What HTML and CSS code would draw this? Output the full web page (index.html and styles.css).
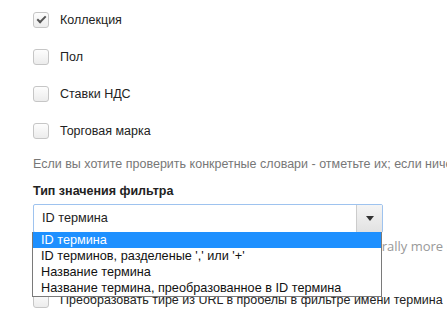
FILE: index.html
```html
<!DOCTYPE html>
<html lang="ru">
<head>
  <meta charset="UTF-8" />
  <meta name="viewport" content="width=device-width, initial-scale=1.0" />
  <title>Фильтр терминов</title>
  <link rel="stylesheet" href="styles.css">
</head>
<body>
  <div class="form">
    <div class="vocabs">
      <label class="check"><span class="box checked"></span>Коллекция</label>
      <label class="check"><span class="box"></span>Пол</label>
      <label class="check"><span class="box"></span>Ставки НДС</label>
      <label class="check"><span class="box"></span>Торговая марка</label>
    </div>
    <p class="help">Если вы хотите проверить конкретные словари - отметьте их; если ничего не отмечено, будут проверены все словари.</p>

    <div class="field">
      <div class="field-label">Тип значения фильтра</div>
      <div class="select-wrap">
        <div class="select">
          <span class="select-value">ID термина</span>
          <span class="select-btn"><span class="arrow"></span></span>
        </div>
        <ul class="options">
          <li class="active">ID термина</li>
          <li>ID терминов, разделеные ',' или '+'</li>
          <li>Название термина</li>
          <li>Название термина, преобразованное в ID термина</li>
        </ul>
      </div>
      <p class="desc">Select the type of value to use in the filter; term ID is generally more reliable.</p>
    </div>

    <label class="check last"><span class="box"></span>Преобразовать тире из URL в пробелы в фильтре имени термина</label>
  </div>
</body>
</html>
```

FILE: styles.css
```css
body {
  margin: 0;
  font-family: "Liberation Sans", Arial, sans-serif;
  font-size: 12.5px;
  color: #222;
  background: #fff;
  overflow: hidden;
}
.form {
  padding: 12px 0 0 33px;
  width: 700px;
}
.vocabs {
  display: flex;
  flex-direction: column;
  gap: 21px;
}
.check {
  display: flex;
  align-items: center;
  gap: 11px;
  height: 16px;
  white-space: nowrap;
}
.box {
  width: 14px;
  height: 14px;
  border: 1px solid #c6c6c6;
  border-radius: 3px;
  background: linear-gradient(#fdfdfd, #ececec);
  position: relative;
  flex: none;
}
.box.checked::after {
  content: "";
  position: absolute;
  left: 3px;
  top: 3px;
  width: 7px;
  height: 3px;
  border-left: 2px solid #555;
  border-bottom: 2px solid #555;
  transform: rotate(-45deg);
}
.help {
  margin: 18px 0 0;
  color: #777;
  white-space: nowrap;
}
.field {
  margin-top: 13px;
}
.field-label {
  font-weight: bold;
  margin-bottom: 6px;
}
.select-wrap {
  position: relative;
  width: 350px;
  font-size: 12.7px;
}
.select {
  display: flex;
  height: 27px;
  border: 1px solid #9ec3ef;
  border-radius: 2px;
  background: #fff;
}
.select-value {
  flex: 1;
  padding-left: 8px;
  line-height: 27px;
}
.select-btn {
  width: 25px;
  border-left: 1px solid #ccc;
  background: linear-gradient(#f4f4f4, #e2e2e2);
  display: flex;
  align-items: center;
  justify-content: center;
}
.arrow {
  width: 0;
  height: 0;
  border-left: 4px solid transparent;
  border-right: 4px solid transparent;
  border-top: 5px solid #333;
}
.options {
  position: absolute;
  left: -1px;
  top: 28px;
  width: 348px;
  margin: 0;
  padding: 0;
  list-style: none;
  background: #fff;
  border: 1px solid #7a7a7a;
  border-top: none;
  z-index: 2;
}
.options li {
  height: 16px;
  line-height: 16px;
  padding-left: 8px;
  color: #111;
  white-space: nowrap;
}
.options li.active {
  background: #1e90ff;
  color: #fff;
}
.desc {
  margin: 4px 0 0;
  font-family: "Open Sans", sans-serif;
  font-size: 13px;
  color: #999;
  white-space: nowrap;
}
.check.last {
  margin-top: 37px;
}
```
